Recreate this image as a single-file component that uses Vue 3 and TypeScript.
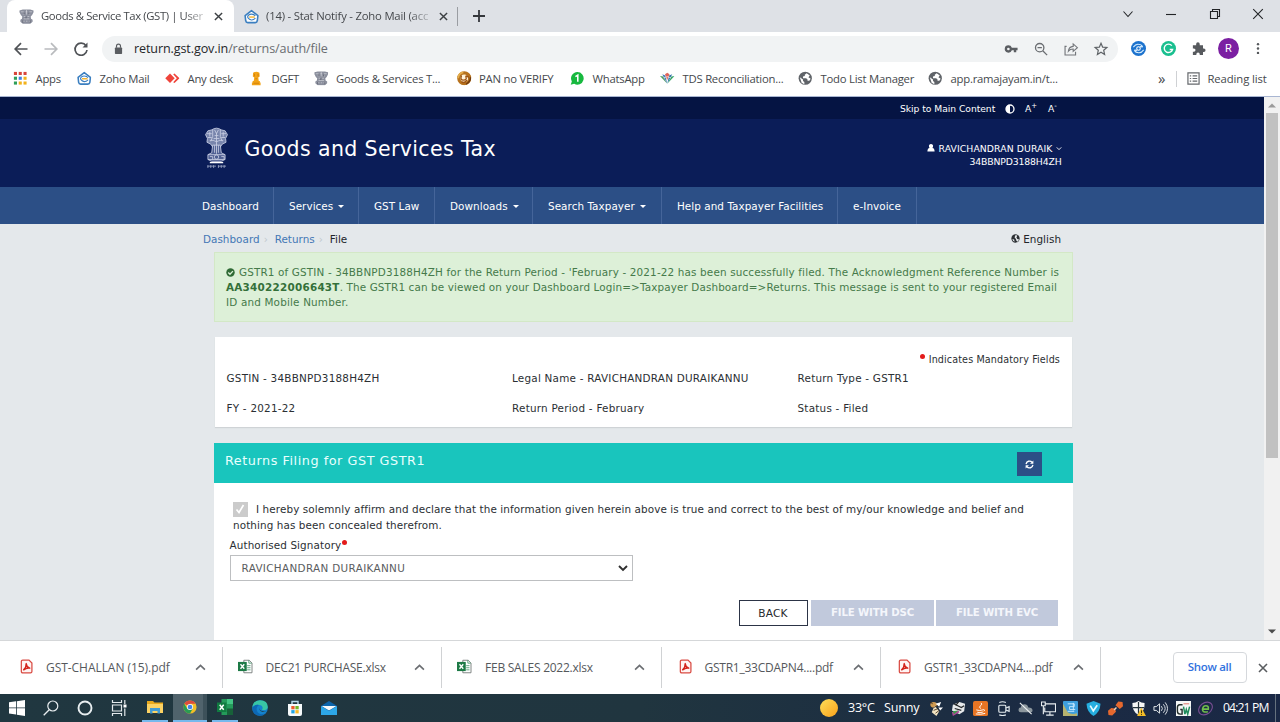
<script setup lang="ts">
interface Item {
  icon: string
  label: string
}

const bookmarks: Item[] = [
  { icon: 'apps', label: 'Apps' },
  { icon: 'zoho', label: 'Zoho Mail' },
  { icon: 'anydesk', label: 'Any desk' },
  { icon: 'pillar', label: 'DGFT' },
  { icon: 'emblem', label: 'Goods & Services T...' },
  { icon: 'pan', label: 'PAN no VERIFY' },
  { icon: 'whatsapp', label: 'WhatsApp' },
  { icon: 'tds', label: 'TDS Reconciliation...' },
  { icon: 'globe', label: 'Todo List Manager' },
  { icon: 'globe', label: 'app.ramajayam.in/t...' },
]

interface NavEntry {
  label: string
  menu?: boolean
}

const nav: NavEntry[] = [
  { label: 'Dashboard' },
  { label: 'Services', menu: true },
  { label: 'GST Law' },
  { label: 'Downloads', menu: true },
  { label: 'Search Taxpayer', menu: true },
  { label: 'Help and Taxpayer Facilities' },
  { label: 'e-Invoice' },
]

const details: string[] = [
  'GSTIN - 34BBNPD3188H4ZH',
  'Legal Name - RAVICHANDRAN DURAIKANNU',
  'Return Type - GSTR1',
  'FY - 2021-22',
  'Return Period - February',
  'Status - Filed',
]

const downloads: Item[] = [
  { icon: 'pdf', label: 'GST-CHALLAN (15).pdf' },
  { icon: 'xlsx', label: 'DEC21 PURCHASE.xlsx' },
  { icon: 'xlsx', label: 'FEB SALES 2022.xlsx' },
  { icon: 'pdf', label: 'GSTR1_33CDAPN4....pdf' },
  { icon: 'pdf', label: 'GSTR1_33CDAPN4....pdf' },
]

const launchers: string[] = [
  'windows', 'search', 'cortana', 'taskview', 'folder', 'chrome', 'excel', 'edge', 'store', 'mail',
]

const tray: string[] = [
  'bee', 'printer', 'java', 'meet', 'cloudoff', 'network', 'bluebox', 'shieldblue',
  'plug', 'defender', 'volume', 'gw', 'escan',
]
</script>

<template>
  <div class="screen">
    <svg class="defs" width="0" height="0">
      <symbol id="apps" viewBox="0 0 16 16">
        <g fill="#d8453a"><rect x="1" y="1" width="3.4" height="3.4" /><rect x="6.3" y="1" width="3.4" height="3.4" /><rect x="11.6" y="1" width="3.4" height="3.4" /></g>
        <g><rect x="1" y="6.3" width="3.4" height="3.4" fill="#2f9e58" /><rect x="6.3" y="6.3" width="3.4" height="3.4" fill="#3f7fe0" /><rect x="11.6" y="6.3" width="3.4" height="3.4" fill="#f2b21b" /></g>
        <g><rect x="1" y="11.6" width="3.4" height="3.4" fill="#2f9e58" /><rect x="6.3" y="11.6" width="3.4" height="3.4" fill="#f2b21b" /><rect x="11.6" y="11.6" width="3.4" height="3.4" fill="#f2b21b" /></g>
      </symbol>
      <symbol id="zoho" viewBox="0 0 16 16">
        <path d="M1.200 7 8 1.800 14.800 7l-.600 5.500q-.300 2-2.200 2H4q-1.900 0-2.200-2z" fill="#fff" stroke="#3b7fc0" stroke-width="1.700" stroke-linejoin="round" />
        <path d="M3.800 9Q4.200 5.500 8 5.500q3 0 4 2M3.800 9q4 5 8.400.800" fill="none" stroke="#3b7fc0" stroke-width="1.200" />
        <path d="M5.500 8.600h6" stroke="#f2b534" stroke-width="1.500" />
      </symbol>
      <symbol id="anydesk" viewBox="0 0 16 16">
        <path d="M5.500 2.800 10.700 8l-5.200 5.200L.300 8z" fill="#ef443b" /><path d="M9 3.500 10.500 2.800 16 8l-5.500 5.200L9 12.500 13 8z" fill="#ef443b" />
      </symbol>
      <symbol id="pillar" viewBox="0 0 16 16">
        <path d="M4.500 2Q8-.500 11.500 2l.300 4-1.600 1.200L10.800 11H12v1.600h.800V16H3.200v-3.400H4V11h1.200l.600-3.800L4.200 6z" fill="#f2a317" /><path d="M6 3v3m4-3v3M7 8.500h2M5 13.500h6" stroke="#c87708" stroke-width=".800" />
      </symbol>
      <symbol id="emblem" viewBox="0 0 16 16">
        <path d="M.500 1.500 4 .600h8l3.500.900v2L14 6.500 12.500 8l.300 2.500 1.700 1v2L12 15.600H4l-2.500-2.100v-2l1.700-1L3.500 8 2 6.500.500 3.500z" fill="#8b8f9d" />
        <path d="M2 3h3m2 0h2m2 0h3M4 5.500h2.500m3 0H12M5 8h2m2 0h2M5 10.500h6M3 13h3m1.500 0h1.500m1.500 0h2.500M8 1v5" stroke="#e0e1e6" stroke-width=".600" />
        <path d="M5.500 4v2m5-2v2M7.500 8v2M4 12v2.500m8-2.500v2.500" stroke="#5b5f6d" stroke-width=".900" />
      </symbol>
      <symbol id="pan" viewBox="0 0 16 16">
        <circle cx="8" cy="8" r="6" fill="#fff4da" stroke="#b7721d" stroke-width="3.600" />
        <path d="M1.200 8Q2 2 7 1.500" fill="none" stroke="#e5ae4c" stroke-width="2" /><path d="M14.800 7Q15 12 10 14.400" fill="none" stroke="#6e3a11" stroke-width="1.600" />
        <path d="M5 5q-2 5 2 5t3-3 3 0M5 12q3 2 6-2" fill="none" stroke="#9e5515" stroke-width="1.500" />
      </symbol>
      <symbol id="whatsapp" viewBox="0 0 16 16">
        <path d="M8 1.200A6.900 6.900 0 1 1 4.600 14L.800 15.100 2 11.500A6.900 6.900 0 0 1 8 1.200z" fill="#17b93f" /><path d="M6 6.200 8.600 4.500V11.800" fill="none" stroke="#fff" stroke-width="1.700" />
      </symbol>
      <symbol id="tds" viewBox="0 0 16 16">
        <path d="M0 5.500 3.500 6 8 14z" fill="#4a9a5d" /><path d="M16 5.500 12.500 6 8 14z" fill="#3ba668" /><path d="M2.500 3.500 6 5l2 9z" fill="#4a80bd" /><path d="M13.500 3.500 10 5l-2 9z" fill="#3478a8" /><path d="M5.500 3.500 8 2l2.500 1.500L8 10z" fill="#e0655a" /><path d="M4 7.500q4-2.500 8 0" stroke="#fff" stroke-width=".700" fill="none" />
      </symbol>
      <symbol id="globe" viewBox="0 0 16 16">
        <circle cx="8" cy="8" r="7.300" fill="#5f6368" />
        <path d="M9.500 2.500 7.500 4v1.500L5.500 6v2H9l1.500 1.500v1.300h2L14 8.500 11.500 7l1.500-2M2 7l3.500 2.500V11L7 12v2.500L4 13z" fill="#fff" />
      </symbol>
      <symbol id="pdf" viewBox="0 0 16 18">
        <path d="M3.500 1.300H11l3.500 3.500V15q0 1.700-1.700 1.700H3.500Q1.800 16.700 1.800 15V3q0-1.700 1.700-1.700z" fill="#fff4f3" stroke="#d94b43" stroke-width="1.500" />
        <path d="M4.600 13Q8 9.500 7.600 5.500q.300 4 4.300 5.500-4-.600-7.300 2z" fill="none" stroke="#d3231b" stroke-width="1.700" stroke-linejoin="round" />
      </symbol>
      <symbol id="xlsx" viewBox="0 0 18 18">
        <path d="M7 1.500h6.500L16.800 5v11.500H7z" fill="#fff" stroke="#777d7b" stroke-width="1.100" /><path d="M13 1.500V5h3.500M11 8h4m-4 2.500h4m-4 2.500h4" fill="none" stroke="#43966a" />
        <rect x="0" y="3.500" width="10.500" height="11" fill="#1d7a46" /><path d="m3 6.300 4.500 5.400m0-5.400L3 11.700" stroke="#fff" stroke-width="1.600" />
      </symbol>
      <symbol id="windows" viewBox="0 0 16 16"><path d="M0 2.300 7 1.300v6.200H0zM7.800 1.200 16 0v7.500H7.800zM0 8.300h7v6.300l-7-1zM7.800 8.300H16V16l-8.200-1.200z" fill="#fff" /></symbol>
      <symbol id="search" viewBox="0 0 16 16"><circle cx="9.800" cy="6" r="5" fill="none" stroke="#e9eef0" stroke-width="1.200" /><path d="M6.200 9.700.700 15.300" stroke="#e9eef0" stroke-width="1.300" /></symbol>
      <symbol id="cortana" viewBox="0 0 16 16"><circle cx="8" cy="8" r="6.500" fill="none" stroke="#e8eef0" stroke-width="1.900" /></symbol>
      <symbol id="taskview" viewBox="0 0 16 16"><path d="M1.500 0v2.500h9V0M1.500 16v-2.500h9V16M1.500 5h9v6h-9zM13.800 0v4m0 4.500V16" fill="none" stroke="#e3e9ec" stroke-width="1.200" /><rect x="12.500" y="4.500" width="3" height="3" fill="#fff" /></symbol>
      <symbol id="folder" viewBox="0 0 16 16"><path d="M0 2h6l1.500 1.500H16V14H0z" fill="#e8a91d" /><path d="M0 5h16v9H0z" fill="#fbd264" /><path d="M3 9h10v5.500h-2.500V12h-5v2.500H3z" fill="#419bd3" /></symbol>
      <symbol id="chrome" viewBox="0 0 16 16">
        <circle cx="8" cy="8" r="7.500" fill="#f2bf26" /><path d="M8 8 1.500 4.200A7.500 7.500 0 0 1 14.500 4.200H8z" fill="#dd4b3e" /><path d="M1.500 4.200 8 15.500A7.500 7.500 0 0 1 1.500 4.200zM4.800 9.900 8 15.500l3.300-5.700z" fill="#299b55" /><circle cx="8" cy="8" r="3.500" fill="#fff" /><circle cx="8" cy="8" r="2.700" fill="#4385e6" />
      </symbol>
      <symbol id="excel" viewBox="0 0 16 16"><path d="M4.500 0H16v16H4.500z" fill="#249a5a" /><path d="M10 0h6v5h-6z" fill="#42c584" /><path d="M10 9.500h6V16h-6z" fill="#176139" /><rect y="3.500" width="9.500" height="9.500" fill="#107c41" /><path d="m2.700 5.800 4 5m0-5-4 5" stroke="#fff" stroke-width="1.500" /></symbol>
      <symbol id="edge" viewBox="0 0 16 16"><circle cx="8" cy="8" r="7.800" fill="#1583cd" /><path d="M.400 7Q1.500.200 8 .200q7.800 0 7.800 7Q15 10.600 10 10q2-4-2-5Q3 4 .400 7z" fill="#38c6a5" /><path d="M.300 7.800Q3 4 7 5q-3.500 2-2 6 2 4.600 8 2.500-2 2.400-5.500 2.300Q.500 15.200.300 7.800z" fill="#0d68b4" /><path d="M8 7.500q-1 2.500 2 3.500 2.500 1 5-.500-2 2-5 1.300Q6.500 10.500 8 7.500z" fill="#203740" /></symbol>
      <symbol id="store" viewBox="0 0 16 16"><path d="M1 4h14v10q0 2-2 2H3q-2 0-2-2z" fill="#f6fafb" /><path d="M5 4V1.500h6V4" fill="none" stroke="#b7d9ea" stroke-width="1.400" /><path d="M4.300 6h3.300v3.300H4.300z" fill="#ed5a2c" /><path d="M8.400 6h3.300v3.300H8.400z" fill="#74b727" /><path d="M4.300 10.100h3.300v3.300H4.300z" fill="#20a3e4" /><path d="M8.400 10.100h3.300v3.300H8.400z" fill="#f8b824" /></symbol>
      <symbol id="mail" viewBox="0 0 16 16"><path d="M0 6 8 1l8 5v8H0z" fill="#0c64ab" /><path d="M.500 6h15L8 10.500z" fill="#f4f8fa" /><path d="M0 6 8 11l8-5v9H0z" fill="#2da7e8" /></symbol>
      <symbol id="bee" viewBox="0 0 16 16"><ellipse cx="6" cy="4" rx="3.500" ry="3" fill="#cf9a50" /><path d="m7 5 5 6-3 5-5-4z" fill="#f4e6c3" /><path d="m8 3 6-2-2 5zM11 7l5 0-3 3z" fill="#fff" /><path d="m6 7 4-2M6 10l5-2M8 13l4-3M2 1l3 2" stroke="#3e2b1b" stroke-width=".900" /></symbol>
      <symbol id="printer" viewBox="0 0 16 16"><path d="m2 4 7-3 6 2-1 8-5 3-8-4z" fill="#e6e9eb" /><path d="m3 3 8 4 3-2M4 8l7 2M8 1 5 5" stroke="#25292b" stroke-width="1.300" fill="none" /><path d="m1 12 7-2 1 2-7 4z" fill="#b3499b" /><path d="m2 11 6-1-5 4z" fill="#3b9b48" /></symbol>
      <symbol id="java" viewBox="0 0 16 16"><rect x="0" y="0" width="16" height="16" rx="2" fill="#e77524" /><path d="M8.500 2q2 1-.500 3t.500 3M3.500 9.500Q7 11 11 9.300M4.500 12q3 1 6-.200M3 13.800q5 1 10-.600M11 9q2.800.500.300 2" stroke="#fff" fill="none" /></symbol>
      <symbol id="meet" viewBox="0 0 16 16"><rect x="3" y="4.500" width="7.500" height="7.500" rx="1" fill="none" stroke="#e6edf0" stroke-width="1.200" /><path d="M10.500 7.500 14 6v5l-3.500-1.500M3.500 1.500q3.500-1.500 7 0M3.500 14.800q3.500 1.500 7 0" fill="none" stroke="#e6edf0" stroke-width="1.200" /></symbol>
      <symbol id="cloudoff" viewBox="0 0 16 16"><path d="M3 12Q.500 12 .500 9.500T3 7q.500-3.500 4-3.500 3 0 4 3.300Q15.500 7 15.500 10q0 2-2 2z" fill="#8b969d" /><path d="m2 2 12.500 12" stroke="#eef2f3" stroke-width="1.200" /></symbol>
      <symbol id="network" viewBox="0 0 16 16"><path d="M5 3h10.500v8.500H4V7M9.500 11.500V15m-4 0h8M.500 1h4v4h-4zM2.500 5v9" fill="none" stroke="#e9eef1" stroke-width="1.200" /></symbol>
      <symbol id="bluebox" viewBox="0 0 16 16"><rect width="16" height="16" rx="1" fill="#3e9fdd" /><path d="M0 3 5 12q4 3 10 1v3H0z" fill="#b7b36f" /><path d="M5 3h7v3H7v3h6M5 11h7M11 2v8" stroke="#c9eaff" fill="none" /></symbol>
      <symbol id="shieldblue" viewBox="0 0 16 16"><path d="M8 0 15.500 3Q15 12 8 16 1 12 .500 3z" fill="#25aee0" /><path d="m4.500 5 3.300 5.500L12 4.500" stroke="#e5faff" stroke-width="1.800" fill="none" /></symbol>
      <symbol id="plug" viewBox="0 0 16 16"><path d="m8 4.500 3-4 4.500.500.500 4.500L12.500 8.500zM7.500 8l-4-.500L0 10.500l.500 4.500 4 .500 4-4z" fill="#e5682e" /><path d="M6.500 9.500 9 7" stroke="#ead5be" stroke-width="1.500" /></symbol>
      <symbol id="defender" viewBox="0 0 16 16"><path d="M8 0q3 2 6.500 2Q15 11 8 15 1 11 1.500 2 5 2 8 0z" fill="#f6f7f7" /><path d="M8 1v13M2 7h12" stroke="#26343d" stroke-width="1.300" /><path d="m11 7 5 9H6.500z" fill="#f4bd28" /><path d="M11.200 10v3m0 1v1" stroke="#332c10" /></symbol>
      <symbol id="volume" viewBox="0 0 16 16"><path d="M1 6h2.500L7 3v10L3.500 10H1z" fill="none" stroke="#edf1f3" /><path d="M9 5.500q2 2.500 0 5m2-7q4 4.500 0 9m2-11q5 6.500 0 13" fill="none" stroke="#e4e9ed" /></symbol>
      <symbol id="gw" viewBox="0 0 16 16"><rect width="16" height="16" fill="#f5f7f6" /><path d="M7 4H4Q1.500 4 1.500 7v4q0 3 3 3h2V9H4.500" stroke="#232d2b" stroke-width="1.500" fill="none" /><path d="m8 6 1.500 8L11 9l1.500 5L14.500 6" stroke="#208c5c" stroke-width="1.600" fill="none" /><path d="M8 3h6" stroke="#df6d61" /></symbol>
      <symbol id="escan" viewBox="0 0 16 16"><ellipse cx="8" cy="8" rx="8" ry="6" transform="rotate(-38 8 8)" fill="none" stroke="#774d91" stroke-width="1.200" /><path d="M5 8.700h6Q11.500 5 8.400 5T4.800 9q0 3.500 5.700 2.500" fill="none" stroke="#70bd4c" stroke-width="1.700" /></symbol>
      <symbol id="cross" viewBox="0 0 10 10"><path d="m1 1 8 8M9 1 1 9" fill="none" stroke="currentColor" stroke-width="1.600" /></symbol>
      <symbol id="up" viewBox="0 0 10 10"><path d="m1 7 4-4 4 4" fill="none" stroke="currentColor" stroke-width="1.500" /></symbol>
    </svg>

    <header class="tabs">
      <div class="tab active">
        <svg class="fav"><use href="#emblem" /></svg>
        <span class="tab-title">Goods &amp; Service Tax (GST) | User</span>
        <svg class="close"><use href="#cross" /></svg>
      </div>
      <div class="tab">
        <svg class="fav"><use href="#zoho" /></svg>
        <span class="tab-title second">(14) - Stat Notify - Zoho Mail (acc</span>
        <svg class="close"><use href="#cross" /></svg>
      </div>
      <i class="tab-line"></i>
      <svg class="plus" viewBox="0 0 12 12"><path d="M6 0v12M0 6h12" stroke="#34373b" stroke-width="1.800" /></svg>
      <div class="window-buttons">
        <svg viewBox="0 0 12 12"><path d="m1.500 3.500 4.500 5 4.500-5" /></svg>
        <svg viewBox="0 0 12 12"><path d="M1 6.500h10" /></svg>
        <svg viewBox="0 0 12 12"><path d="M1.500 3.500h7v7h-7zM3.500 3.500v-2h7v7h-2" /></svg>
        <svg viewBox="0 0 12 12"><path d="m1.200 1.200 9.600 9.600M10.800 1.200 1.200 10.800" /></svg>
      </div>
    </header>

    <div class="toolbar">
      <div class="history">
        <svg viewBox="0 0 14 14"><path d="M13.500 7H1.500M7 1.200 1.200 7 7 12.800" stroke="#505357" /></svg>
        <svg viewBox="0 0 14 14"><path d="M.500 7h12M7 1.200 12.800 7 7 12.800" stroke="#b9bbbe" /></svg>
        <svg viewBox="0 0 14 14"><path d="M12 3.800A6 6 0 1 0 13 8" stroke="#505357" /><path d="M13.500.500v5h-5z" fill="#505357" stroke="none" /></svg>
      </div>
      <div class="omnibox">
        <svg class="lock" viewBox="0 0 10 13"><rect x="1" y="4.800" width="8" height="7.200" rx=".800" fill="#5a5d61" /><path d="M2.800 5V3.200a2.200 2.200 0 0 1 4.400 0V5" fill="none" stroke="#5a5d61" stroke-width="1.300" /></svg>
        <span class="url"><b>return.gst.gov.in</b>/returns/auth/file</span>
        <div class="omni-icons">
          <svg viewBox="0 0 16 16"><path d="M5 3.800a4.200 4.200 0 0 1 4 2.800h6.500v2.800H14v2.400h-2.800V9.400H9A4.200 4.200 0 1 1 5 3.800zm0 2.700a1.500 1.500 0 1 0 0 3 1.500 1.500 0 0 0 0-3z" fill="#5b5e62" /></svg>
          <svg viewBox="0 0 16 16"><g fill="none" stroke="#6a6d71" stroke-width="1.500"><circle cx="6.500" cy="6.500" r="4.800" /><path d="m10 10 5 5M4 6.500h5" /></g></svg>
          <svg viewBox="0 0 16 16"><g fill="none" stroke="#74777b" stroke-width="1.300"><path d="M3 5H1.200v9.800h12V11" /><path d="M5 10.500Q5.500 5.500 10.500 5V2.200L15.300 6.500 10.500 10.700V8Q7 8 5 10.500z" /></g></svg>
          <svg viewBox="0 0 16 16"><path d="m8 1.500 1.900 4.400 4.800.400-3.600 3.200 1 4.700L8 11.700l-4.100 2.500 1-4.700L1.300 6.300l4.800-.400z" fill="none" stroke="#5f6367" stroke-width="1.400" /></svg>
        </div>
      </div>
      <div class="extensions">
        <svg viewBox="0 0 16 16"><circle cx="8" cy="8" r="8" fill="#1d73ce" /><path d="M2.500 6.500Q5 3 8 3.500q3 0 4.500 2.500M13.500 9.500Q11 13 8 12.500q-3 0-4.500-2.500M12.500 6.500 9.500 6M3.500 9.500l3 .500" fill="none" stroke="#d9efff" stroke-width="1.100" /><circle cx="8" cy="8" r="1.900" fill="none" stroke="#fff" stroke-width="1.100" /></svg>
        <svg viewBox="0 0 16 16"><circle cx="8" cy="8" r="8" fill="#1abf8f" /><path d="M11.500 5A4.500 4.500 0 1 0 12.300 9H9.300" fill="none" stroke="#fff" stroke-width="1.500" /></svg>
        <svg viewBox="0 0 16 16"><path d="M2 4.500h3.500V3.300a1.900 1.900 0 1 1 3.800 0v1.200h3.500V8h.900a1.800 1.800 0 0 1 0 3.600h-.900V15H9.300v-1a1.800 1.800 0 0 0-3.600 0v1H2v-3.500h1a1.800 1.800 0 0 0 0-3.600H2z" fill="#575a5e" /></svg>
        <span class="avatar">R</span>
        <svg viewBox="0 0 16 16"><g fill="#55585c"><circle cx="8" cy="3" r="1.400" /><circle cx="8" cy="8" r="1.400" /><circle cx="8" cy="13" r="1.400" /></g></svg>
      </div>
    </div>

    <div class="bookmarks">
      <div v-for="b in bookmarks" :key="b.label" class="bookmark">
        <svg><use :href="'#' + b.icon" /></svg><span>{{ b.label }}</span>
      </div>
      <span class="overflow">»</span>
      <div class="reading">
        <svg viewBox="0 0 14 14"><path d="M1 1h12v12H1zM3 4.200h1.500M3 7h1.500M3 9.800h1.500M6 4.200h5M6 7h5M6 9.800h5" fill="none" stroke="#66696d" stroke-width="1.300" /></svg>
        <span>Reading list</span>
      </div>
    </div>

    <main class="viewport">
      <div class="page">
        <div class="utility">
          <span>Skip to Main Content</span>
          <svg viewBox="0 0 10 10"><circle cx="5" cy="5" r="4" fill="none" stroke="#fff" stroke-width="1.300" /><path d="M5 1a4 4 0 0 0 0 8z" fill="#fff" /></svg>
          <span class="size">A<sup>+</sup></span>
          <span class="size">A<sup>-</sup></span>
        </div>
        <div class="brand">
          <svg class="ashoka" viewBox="0 0 26 44">
            <g fill="none" stroke="#c8cee3" stroke-width=".900">
              <path d="M8 3Q13-.500 18 3l4 1 2.500 4-2 4 .500 4-4 2-2 3H9l-2-3-4-2 .500-4-2-4L4 4z" fill="#7885ac" />
              <path d="M9 19h8l1 8 4 2v5l-4 2H8l-4-2v-5l4-2z" fill="#4f5f92" />
              <path d="M9 3v7l-2 5M17 3v7l2 5M11 3l2 4 2-4M3 7h5M18 7h5M4 11h4m10 0h4M11 9h4m-5 3h6m-5 3h4M13 6v14M6 5v5m14-5v5M6 14h5m4 0h5" />
              <path d="M11 19v8m4-8v8M13 20v8" />
              <path d="M4 29h18M4 34h18M6 31h3v3M18 31h3v3" /><circle cx="13" cy="31.500" r="2.300" />
              <path d="M6 37.300h14" stroke="#fff" stroke-width="1.400" />
              <path d="M3.500 41h9M14.500 41h8.500M4 40v3m3-3v3m3-3v3m5-3v3m3-3v3m3-3v3" stroke="#aab3cf" stroke-width=".800" />
            </g>
          </svg>
          <h1>Goods and Services Tax</h1>
          <div class="user">
            <div class="name">
              <svg viewBox="0 0 10 10"><path d="M5 0a2.600 2.600 0 0 1 2.500 3.300L6.800 5Q9.500 5.500 9.500 9.500h-9Q.500 5.500 3.200 5l-.700-1.700A2.600 2.600 0 0 1 5 0z" fill="#fff" /></svg>
              RAVICHANDRAN DURAIK
              <svg class="caret" viewBox="0 0 8 8"><path d="m1 2.500 3 3 3-3" fill="none" stroke="#fff" stroke-width="1.200" /></svg>
            </div>
            <div class="uid">34BBNPD3188H4ZH</div>
          </div>
        </div>
        <nav>
          <a v-for="n in nav" :key="n.label">{{ n.label }}<i v-if="n.menu"></i></a>
        </nav>
        <div class="crumbs">
          <a>Dashboard</a><i>›</i><a>Returns</a><i>›</i><span>File</span>
          <div class="lang">
            <svg viewBox="0 0 10 10"><circle cx="5" cy="5" r="4.600" fill="#2b2f33" /><path d="M5.500 1 7 2 6 4l1 1.500L9 6 7.500 8.500 6 7.500 5.500 5.500 4 4 4.500 2zM1.500 5.500l2 .500L4 8.500 2.300 7.500z" fill="#e4e8eb" /></svg>
            English
          </div>
        </div>
        <section class="content">
          <div class="alert">
            <div class="a1"><svg viewBox="0 0 10 10"><circle cx="5" cy="5" r="4.700" fill="#2f6a35" /><path d="m2.500 5 1.900 1.900 3.300-3.400" fill="none" stroke="#ddf0d7" stroke-width="1.500" /></svg>GSTR1 of GSTIN - 34BBNPD3188H4ZH for the Return Period - 'February - 2021-22 has been successfully filed. The Acknowledgment Reference Number is</div>
            <div class="a2"><b>AA340222006643T</b>. The GSTR1 can be viewed on your Dashboard Login=&gt;Taxpayer Dashboard=&gt;Returns. This message is sent to your registered Email</div>
            <div class="a3">ID and Mobile Number.</div>
          </div>
          <div class="info">
            <div class="mandatory"><i class="dot"></i>Indicates Mandatory Fields</div>
            <div class="details"><span v-for="d in details" :key="d">{{ d }}</span></div>
          </div>
          <div class="filing">
            <div class="filing-head">
              <h2>Returns Filing for GST GSTR1</h2>
              <button class="refresh"><svg viewBox="0 0 10 10"><path d="M1.200 4.500A3.800 3.800 0 0 1 7.800 2.500M8.800 5.500A3.800 3.800 0 0 1 2.200 7.500" fill="none" stroke="#fff" stroke-width="1.500" /><path d="M9.300.600v3.700H5.600zM.700 9.400V5.700h3.700z" fill="#fff" /></svg></button>
            </div>
            <div class="filing-body">
              <div class="declare">
                <div class="d1"><span class="check"><svg viewBox="0 0 14 14"><path d="m3.500 7.500 2.500 3 4.500-7.500" fill="none" stroke="#fff" stroke-width="1.700" /></svg></span>I hereby solemnly affirm and declare that the information given herein above is true and correct to the best of my/our knowledge and belief and</div>
                <div class="d2">nothing has been concealed therefrom.</div>
              </div>
              <div class="sign-label">Authorised Signatory<i class="dot"></i></div>
              <div class="select"><span>RAVICHANDRAN DURAIKANNU</span><svg viewBox="0 0 10 8"><path d="m1 2 4 4 4-4" fill="none" stroke="#303030" stroke-width="1.900" /></svg></div>
              <div class="actions">
                <button class="back">BACK</button>
                <button class="dsc">FILE WITH DSC</button>
                <button class="evc">FILE WITH EVC</button>
              </div>
            </div>
          </div>
        </section>
      </div>
      <aside class="scroll">
        <svg viewBox="0 0 8 5"><path d="M0 4.500 4 .500l4 4z" fill="#9b9b9b" /></svg>
        <i></i>
        <svg viewBox="0 0 8 5"><path d="M0 .500l4 4 4-4z" fill="#4b4b4b" /></svg>
      </aside>
    </main>

    <div class="downloads">
      <div v-for="(d, n) in downloads" :key="n" class="download">
        <svg class="file" :class="d.icon"><use :href="'#' + d.icon" /></svg>
        <span>{{ d.label }}</span>
        <svg class="chev"><use href="#up" /></svg>
      </div>
      <button class="show">Show all</button>
      <svg class="shut"><use href="#cross" /></svg>
    </div>

    <footer class="taskbar">
      <div class="launchers">
        <span v-for="l in launchers" :key="l" :class="['launcher', l]"><svg><use :href="'#' + l" /></svg></span>
      </div>
      <i class="sun"></i>
      <span class="temp">33°C</span><span class="sky">Sunny</span>
      <div class="tray"><svg v-for="t in tray" :key="t"><use :href="'#' + t" /></svg></div>
      <span class="clock">04:21 PM</span>
      <i class="peek"></i>
    </footer>
  </div>
</template>

<style>
html, body { margin: 0; overflow: hidden; background: #fff; }
</style>

<style scoped>
* { box-sizing: border-box; }
.screen { width: 1280px; height: 722px; display: flex; flex-direction: column; overflow: hidden; font: 11.3px/16px "Open Sans", "Noto Sans", sans-serif; color: #45484c; white-space: nowrap; }
svg { display: block; flex: none; overflow: visible; }
.defs { position: absolute; }
button { font: inherit; padding: 0; border: 0; }

.tabs { height: 32px; flex: none; background: #dee1e6; display: flex; align-items: center; padding-left: 7px; }
.tab { width: 227px; height: 32px; display: flex; align-items: center; padding-left: 12px; }
.tab.active { background: #fff; border-radius: 8px 8px 0 0; }
.fav { width: 15px; height: 15px; margin-right: 7px; }
.tab-title { width: 166px; letter-spacing: -.38px; -webkit-mask-image: linear-gradient(90deg, #000 86%, rgba(0, 0, 0, .15)); mask-image: linear-gradient(90deg, #000 86%, rgba(0, 0, 0, .15)); }
.tab:not(.active) { width: 223px; padding-left: 10px; }
.tab-title.second { letter-spacing: -.2px; }
.close { width: 9px; height: 9px; margin-left: 7px; color: #3c4043; }
.tab-line { width: 1px; height: 19px; background: #9a9da2; }
.plus { width: 12px; height: 12px; margin-left: 15px; }
.window-buttons { margin-left: auto; display: flex; gap: 31.500px; padding-right: 16px; }
.window-buttons svg { width: 12px; height: 12px; margin-top: -4px; fill: none; stroke: #222427; stroke-width: 1.100; }

.toolbar { height: 33px; flex: none; display: flex; align-items: center; padding: 0 12px 0 14px; }
.history { display: flex; gap: 16px; width: 88px; }
.history svg { width: 14px; height: 14px; fill: none; stroke-width: 1.700; }
.omnibox { width: 1016px; height: 26px; border-radius: 13px; background: #f1f3f4; display: flex; align-items: center; padding: 0 10px 0 12px; }
.lock { width: 9px; height: 12px; }
.url { margin-left: 11px; font-size: 12.600px; letter-spacing: -.120px; color: #6a6d71; }
.url b { font-weight: 400; color: #25272a; }
.omni-icons { margin-left: auto; display: flex; gap: 16px; }
.omni-icons svg { width: 14px; height: 14px; }
.extensions { margin-left: 13px; display: flex; align-items: center; gap: 15px; }
.extensions svg { width: 15px; height: 15px; }
.extensions svg:last-child { width: 14px; }
.avatar { width: 21px; height: 21px; margin: 0 -3px; border-radius: 50%; background: #7b1fa2; color: #fff; font: 11px/21px Roboto, sans-serif; text-align: center; }

.bookmarks { height: 32px; flex: none; border-bottom: 1px solid #a9b6d2; display: grid; grid-template-columns: 64px 88px 84px 64.500px 143px 113.500px 90px 138px 130px 230px 17.500px 1fr; align-items: center; padding: 0 0 4px 13px; }
.bookmark { display: flex; align-items: center; letter-spacing: -.23px; }
.bookmark svg { width: 14.500px; height: 14.500px; margin-right: 8px; }
.overflow { font-size: 15px; line-height: 15px; margin-top: -1px; }
.reading { display: flex; align-items: center; height: 16px; border-left: 1px solid #cfd1d4; padding-left: 10px; letter-spacing: -.1px; }
.reading svg { width: 13px; height: 13px; margin-right: 8px; }

.viewport { height: 543px; flex: none; display: flex; font-family: "DejaVu Sans", sans-serif; font-size: 10.400px; color: #2b2f33; }
.page { width: 1264px; height: 543px; overflow: hidden; background: #e4e8eb; }
.utility { height: 22px; background: #051443; color: #fff; display: flex; align-items: center; padding: 1px 0 0 900px; font-size: 9.200px; }
.utility > span:first-child { width: 105px; letter-spacing: -.040px; }
.utility svg { width: 10px; height: 10px; }
.utility .size { margin-left: 10px; width: 13px; }
.size sup { font-size: 7px; line-height: 0; vertical-align: 4px; }
.brand { height: 68px; background: #0b1d58; display: flex; padding-left: 204px; color: #fff; }
.ashoka { width: 25px; height: 42px; margin-top: 8px; }
h1 { margin: 17px 0 0 15.500px; font: 400 20.500px/26px "DejaVu Sans", sans-serif; letter-spacing: .380px; width: 600px; }
.user { width: 217px; padding-top: 22.500px; text-align: right; font-size: 9.300px; line-height: 13px; letter-spacing: -.150px; }
.name { display: flex; align-items: center; justify-content: flex-end; letter-spacing: .080px; }
.user svg { width: 8px; height: 8px; margin-right: 3px; }
.user .caret { width: 6px; height: 7px; margin: 0 0 0 3px; }
nav { height: 37px; background: #2c4f86; display: grid; grid-template-columns: 87px 85px 76px 98px 129px 176px 79px; padding-left: 187px; letter-spacing: .060px; }
nav a { display: flex; align-items: center; padding-left: 15px; border-right: 1px solid #45659a; color: #fff; }
nav a i { margin: 2px 0 0 5px; border: 3px solid transparent; border-top-color: #fff; border-bottom: 0; }
.crumbs { height: 28px; display: flex; align-items: center; padding: 1.500px 0 0 203px; color: #22262a; letter-spacing: .030px; }
.crumbs a { color: #4377b5; }
.crumbs i { width: 15px; padding-left: 4px; color: #c2c8ce; font-style: normal; }
.crumbs .lang { width: 51px; margin-left: auto; margin-right: 203px; display: flex; align-items: center; justify-content: flex-end; gap: 3px; }
.lang svg { width: 9px; height: 9px; }
.content { width: 859px; margin-left: 214px; letter-spacing: .240px; }
.alert { height: 70px; background: #ddf0d8; border: 1px solid #d3e8c6; padding: 12px 11px; line-height: 15px; color: #457a4a; }
.a1 { display: flex; align-items: center; letter-spacing: .157px; }
.a1 svg { width: 9px; height: 9px; margin-right: 4px; }
.a2 { letter-spacing: .125px; }
.a3 { letter-spacing: .180px; }
.alert b { color: #34703a; letter-spacing: .250px; }
.info { margin: 15px 1px 0; height: 90px; background: #fff; box-shadow: 0 1px 1px #cfd3d6; padding: 16px 12px 0 11.500px; }
.mandatory { display: flex; justify-content: flex-end; font-size: 9.600px; line-height: 14px; letter-spacing: .120px; }
.dot { width: 5px; height: 5px; border-radius: 50%; background: #e31b1b; margin: 1px 4px 0 0; }
.details { display: grid; grid-template-columns: 285.500px 285.500px 1fr; grid-auto-rows: 30px; line-height: 22px; }
.filing { margin-top: 16px; height: 210px; background: #fff; }
.filing-head { height: 40px; background: #19c5bd; display: flex; padding-left: 11px; }
h2 { margin: 9px 0 0; width: 792px; font: 400 12.800px/18px "DejaVu Sans", sans-serif; letter-spacing: .540px; color: #e8fffd; }
.refresh { width: 25px; height: 24px; margin-top: 9px; background: #2c4f86; display: grid; place-items: center; }
.refresh svg { width: 9px; height: 9px; }
.filing-body { padding: 19px 15px 0 15.500px; }
.declare { padding-left: 3.500px; line-height: 15.500px; }
.d1 { display: flex; align-items: center; letter-spacing: .110px; }
.d2 { letter-spacing: .100px; }
.check { width: 15px; height: 15px; background: #cbcbcb; margin: 0 8px 0 0; }
.check svg { width: 14px; height: 14px; }
.sign-label { display: flex; line-height: 14px; margin-top: 4.500px; letter-spacing: .120px; }
.sign-label .dot { margin: 2px 0 0 1px; }
.select { width: 403px; height: 26px; margin-top: 3.500px; border: 1px solid #bdbfc1; display: flex; align-items: center; justify-content: space-between; padding: 0 4px 0 11px; color: #5a5d60; letter-spacing: .340px; }
.select svg { width: 10px; height: 8px; margin-top: -1px; }
.actions { display: flex; justify-content: flex-end; margin-top: 18.500px; line-height: 24px; letter-spacing: 0; }
.actions button { height: 26px; background: #c1c9dc; color: #f4f6fb; font-weight: 700; font-size: 10.200px; letter-spacing: -.160px; }
.actions .back { width: 69px; margin-right: 3.500px; background: #fff; border: 1px solid #2c3446; color: #26292d; font-weight: 400; font-size: 10.600px; letter-spacing: .150px; }
.actions .dsc { width: 123px; margin-right: 2px; }
.actions .evc { width: 122px; }
.scroll { width: 16px; background: #f1f1f1; display: flex; flex-direction: column; align-items: center; padding: 6px 0; }
.scroll svg { width: 8px; height: 5px; }
.scroll i { width: 12px; height: 345px; margin: 5px 0 auto; background: #c1c1c1; }

.downloads { height: 54px; flex: none; border-top: 1px solid #d5d7d9; display: flex; align-items: center; font-size: 12px; color: #55585c; padding-left: 3px; }
.download { width: 219.500px; height: 41px; border-right: 1px solid #d0d2d4; display: flex; align-items: center; padding-left: 16px; letter-spacing: -.24px; }
.download:first-child { letter-spacing: -.050px; }
.file { width: 15px; height: 15px; margin: -2px 12px 0 0; }
.file.xlsx { margin: -2px 13px 0 -1px; }
.chev { width: 11px; height: 11px; margin: 0 16px 0 auto; color: #6b6e72; }
.show { width: 74px; height: 31px; margin-left: 72px; padding-bottom: 2px; background: #fff; border: 1px solid #d5d8dc; border-radius: 4px; color: #3273de; font: 600 11.500px "Open Sans", sans-serif; letter-spacing: -.3px; }
.shut { width: 10px; height: 10px; margin-left: 11px; color: #5a5d60; }

.taskbar { height: 28px; flex: none; background: linear-gradient(90deg, #203740 0%, #20353f 50%, #1b2b43 80%, #1a2845 100%); display: flex; align-items: center; color: #fff; font-size: 12.600px; }
.launchers { width: 820px; height: 28px; display: grid; grid-template-columns: 34px 34px 33px 36px 36px 34px 36px 34px 35px 34px; }
.launcher { display: grid; place-items: center; height: 28px; }
.launcher svg { width: 16px; height: 16px; }
.folder { border-bottom: 2px solid #76b9ed; margin: 0 5px; }
.chrome { border-bottom: 2px solid #76b9ed; background: linear-gradient(90deg, #50636c 30px, #3d515a 30px); }
.launcher.chrome svg { width: 14px; height: 14px; }
.excel { border-bottom: 2px solid #76b9ed; margin: 0 5px; }
.sun { width: 18px; height: 18px; border-radius: 50%; background: linear-gradient(135deg, #ffdf59, #f9a11b); }
.temp { width: 36px; margin-left: 10px; letter-spacing: -.3px; }
.sky { width: 44px; letter-spacing: -.2px; }
.tray { display: flex; gap: 7.500px; }
.tray svg { width: 15px; height: 15px; }
.clock { margin-left: 10px; font-size: 12.200px; letter-spacing: -.88px; }
.peek { width: 1px; height: 28px; background: #65717e; margin: 0 4px 0 auto; }
</style>
